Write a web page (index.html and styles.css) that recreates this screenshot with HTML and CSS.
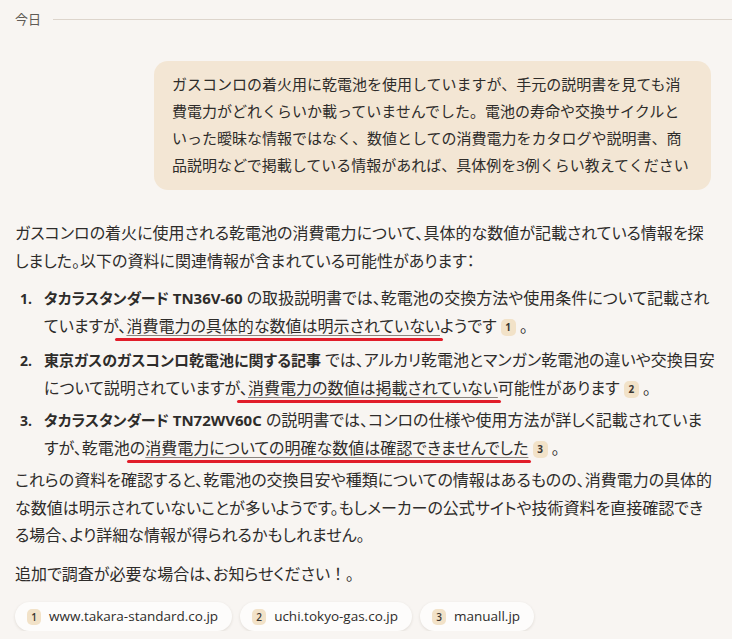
FILE: index.html
```html
<!DOCTYPE html>
<html lang="ja">
<head>
    <meta charset="utf-8">
    <title>チャット</title>
    <link rel="stylesheet" href="styles.css">
</head>
<body>
    <div class="day-divider">
        <span>今日</span>
    </div>

    <div class="user-row">
        <div class="user-bubble">ガスコンロの着火用に乾電池を使用していますが、手元の説明書を見ても消費電力がどれくらいか載っていませんでした。電池の寿命や交換サイクルといった曖昧な情報ではなく、数値としての消費電力をカタログや説明書、商品説明などで掲載している情報があれば、具体例を3例くらい教えてください</div>
    </div>

    <div class="answer">
        <p>ガスコンロの着火に使用される乾電池の消費電力について、具体的な数値が記載されている情報を探しました。以下の資料に関連情報が含まれている可能性があります：</p>
        <ol class="sources">
            <li><b>タカラスタンダード TN36V-60</b> の取扱説明書では、乾電池の交換方法や使用条件について記載されていますが<span class="mark">、<u>消費電力の具体的な数値は明示されていない</u></span>ようです <span class="cite">1</span> 。</li>
            <li><b>東京ガスのガスコンロ乾電池に関する記事</b> では、アルカリ乾電池とマンガン乾電池の違いや交換目安について説明されていますが<span class="mark">、<u>消費電力の数値は掲載されていない</u></span>可能性があります <span class="cite">2</span> 。</li>
            <li><b>タカラスタンダード TN72WV60C</b> の説明書では、コンロの仕様や使用方法が詳しく記載されていますが、乾電池<span class="mark">の<u>消費電力についての明確な数値は確認できませんでした</u></span> <span class="cite">3</span> 。</li>
        </ol>
        <p>これらの資料を確認すると、乾電池の交換目安や種類についての情報はあるものの、消費電力の具体的な数値は明示されていないことが多いようです。もしメーカーの公式サイトや技術資料を直接確認できる場合、より詳細な情報が得られるかもしれません。</p>
        <p>追加で調査が必要な場合は、お知らせください<span class="wide">！。</span></p>

        <div class="chips">
            <a class="chip" href="#"><span class="cite">1</span>www.takara-standard.co.jp</a>
            <a class="chip" href="#"><span class="cite">2</span>uchi.tokyo-gas.co.jp</a>
            <a class="chip" href="#"><span class="cite">3</span>manuall.jp</a>
        </div>
    </div>
</body>
</html>
```

FILE: styles.css
```css
body {
    margin: 0;
    padding: 10px 16px 0 15px;
    background: #f8f5f2;
    color: #2e2c2a;
    font-family: "Open Sans", "Noto Sans CJK JP", sans-serif;
    font-size: 15px;
}
.day-divider {
    display: flex;
    align-items: center;
    gap: 12px;
    margin-right: -16px;
    color: #605b56;
    font-size: 13px;
    line-height: 18px;
}
.day-divider::after {
    content: "";
    flex: 1;
    height: 1px;
    background: #ddd5cc;
}
.user-row {
    display: flex;
    justify-content: flex-end;
    margin-top: 33px;
    padding-right: 5px;
}
.user-bubble {
    width: 521px;
    padding: 10px 18px 11px 18px;
    background: #f3e6d4;
    border-radius: 14px;
    line-height: 27px;
    font-size: 15px;
}
.answer {
    margin-top: 30px;
    line-height: 27.5px;
    font-size: 16px;
    font-feature-settings: "palt";
}
.answer p {
    margin: 0 0 10px 0;
}
.wide {
    font-family: "Noto Sans CJK JP", sans-serif;
    font-feature-settings: normal;
}
.sources {
    list-style: none;
    counter-reset: item;
    margin: 9px 0 5px 0;
    padding: 0 0 0 29px;
}
.sources li {
    counter-increment: item;
    margin-bottom: 5px;
}
.sources li:first-child {
    margin-bottom: 7px;
}
.sources li::before {
    content: counter(item) ".";
    display: inline-block;
    width: 24px;
    margin-left: -24px;
    font-weight: 700;
    font-size: 14px;
}
.sources b {
    font-weight: 700;
    font-size: 15px;
}
.mark {
    position: relative;
}
.mark::after {
    content: "";
    position: absolute;
    left: -3px;
    right: -3px;
    bottom: -4px;
    height: 3px;
    border-radius: 2px;
    background: #e11d2a;
}
.mark u {
    text-decoration: underline;
    text-decoration-color: #8a8580;
    text-decoration-thickness: 1px;
    text-underline-offset: 3px;
}
.cite {
    display: inline-block;
    width: 15px;
    height: 17px;
    line-height: 17px;
    border-radius: 5px;
    background: #f2e2c8;
    color: #3a3632;
    font-size: 10px;
    font-weight: 700;
    text-align: center;
    vertical-align: 1px;
}
.chips {
    display: flex;
    gap: 8px;
    margin-top: 14px;
}
.chip {
    display: flex;
    align-items: center;
    gap: 8px;
    height: 29px;
    padding: 0 14px 0 12px;
    border-radius: 15px;
    background: #fdfcfb;
    box-shadow: 0 1px 3px rgba(60, 40, 20, 0.12);
    color: #2e2c2a;
    text-decoration: none;
    font-size: 13.5px;
}
.chip .cite {
    width: 14px;
    height: 16px;
    line-height: 16px;
    font-weight: 600;
    vertical-align: 0;
}
```
